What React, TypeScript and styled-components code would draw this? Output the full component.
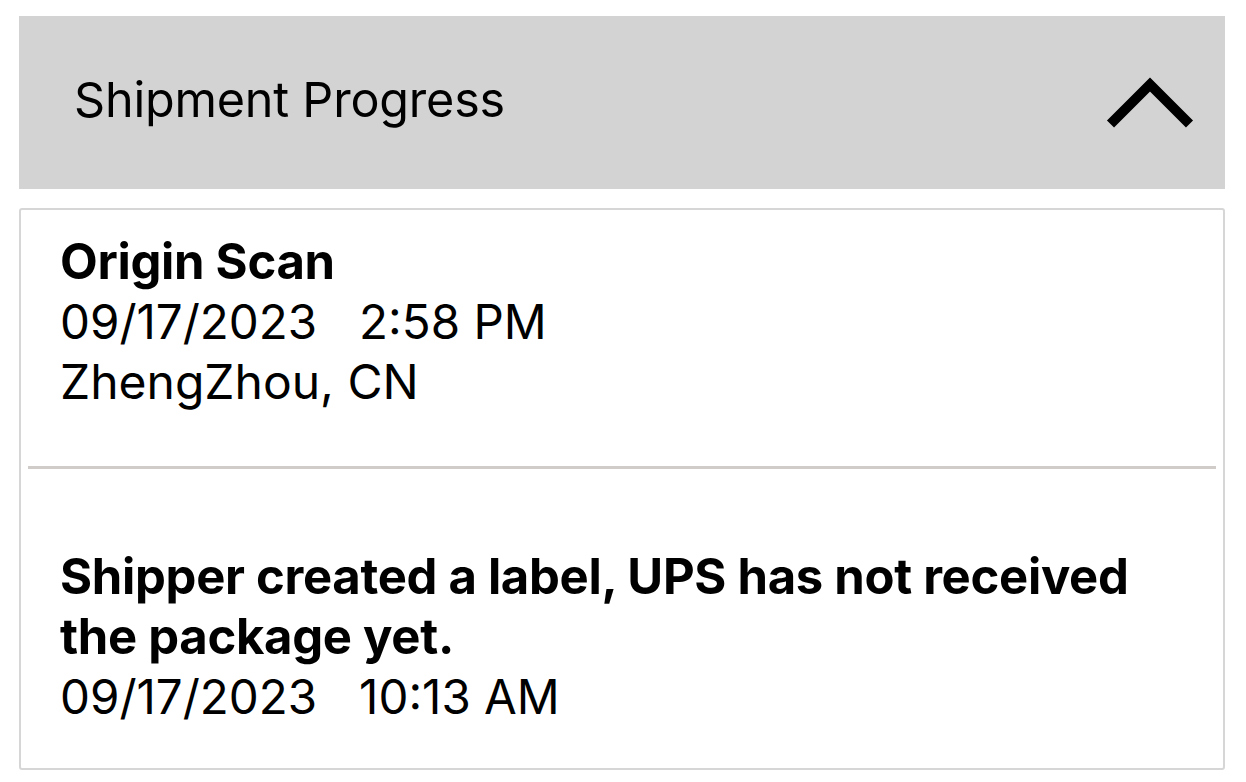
import React from "react";
import styled, { createGlobalStyle } from "styled-components";

const Global = createGlobalStyle`
  html, body { margin: 0; padding: 0; background: #ffffff; }
  body { font-family: Inter, "Noto Sans", sans-serif; color: #000; }
`;

const Page = styled.div`
  padding: 16px 21px 12px 19px;
  display: flex;
  flex-direction: column;
  gap: 19px;
`;

const Header = styled.div`
  height: 173px;
  background: #d3d3d3;
  display: flex;
  align-items: center;
  justify-content: space-between;
  padding: 0 32px 0 55px;
  box-sizing: border-box;
`;

const Title = styled.div`
  font-size: 48.5px;
  font-weight: 400;
  letter-spacing: -0.2px;
  margin-top: -6px;
`;

const Chevron = styled.svg`
  width: 92px;
  height: 60px;
  margin-top: -2px;
  margin-right: -4px;
`;

const Card = styled.div`
  border: 2px solid #d6d6d6;
  border-radius: 3px;
  background: #fff;
`;

const Item = styled.div<{ $pt: number; $pb: number }>`
  padding: ${(p) => p.$pt}px 60px ${(p) => p.$pb}px 39px;
  font-size: 48px;
  line-height: 60px;
`;

const EventName = styled.div`
  font-weight: 700;
  font-size: 49px;
  letter-spacing: -0.3px;
`;

const Line = styled.div`
  display: flex;
  gap: 42px;
  font-size: 47.5px;
`;

const Divider = styled.div`
  height: 3px;
  background: #d0ccc9;
  margin: 0 7px;
`;

const events = [
  {
    name: "Origin Scan",
    date: "09/17/2023",
    time: "2:58 PM",
    place: "ZhengZhou, CN",
    pt: 22,
    pb: 54,
  },
  {
    name: "Shipper created a label, UPS has not received the package yet.",
    date: "09/17/2023",
    time: "10:13 AM",
    place: "",
    pt: 78,
    pb: 41,
  },
];

export default function App() {
  return (
    <>
      <Global />
      <Page>
        <Header>
          <Title>Shipment Progress</Title>
          <Chevron viewBox="0 0 92 60">
            <polyline
              points="5.5,52 45,12.5 84.5,52"
              fill="none"
              stroke="#000"
              strokeWidth="10"
              strokeLinecap="butt"
              strokeLinejoin="miter"
            />
          </Chevron>
        </Header>
        <Card>
          {events.map((e, i) => (
            <React.Fragment key={i}>
              {i > 0 && <Divider />}
              <Item $pt={e.pt} $pb={e.pb}>
                <EventName>{e.name}</EventName>
                <Line>
                  <span>{e.date}</span>
                  <span>{e.time}</span>
                </Line>
                {e.place && <div>{e.place}</div>}
              </Item>
            </React.Fragment>
          ))}
        </Card>
      </Page>
    </>
  );
}
